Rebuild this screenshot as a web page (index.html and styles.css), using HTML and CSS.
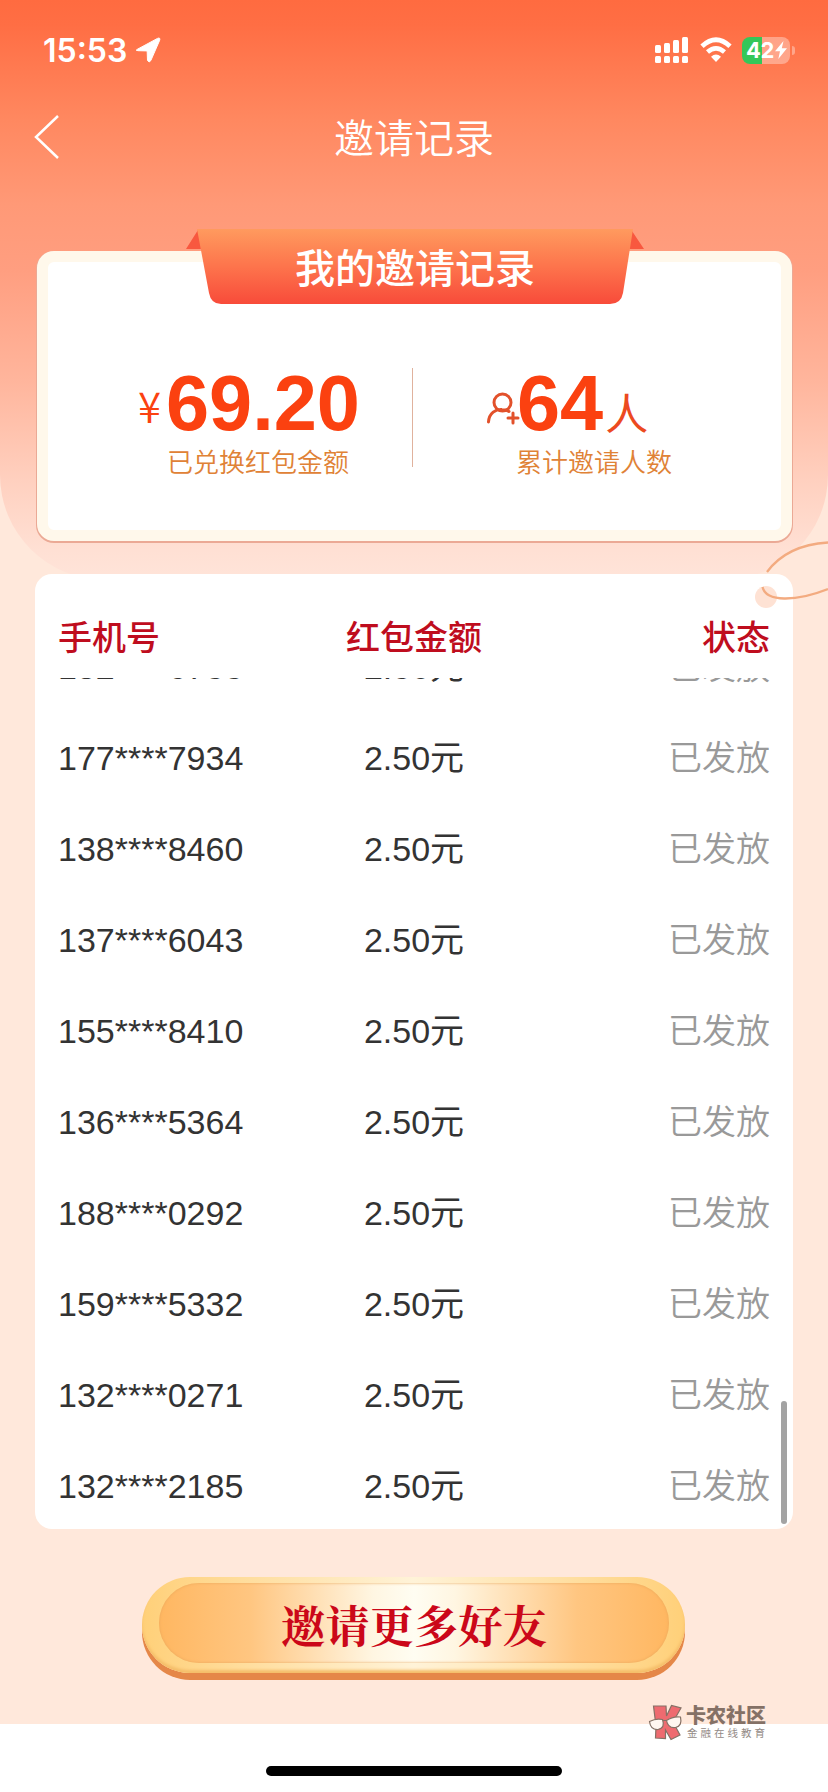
FILE: index.html
```html
<!DOCTYPE html>
<html lang="zh-CN">
<head>
  <meta charset="UTF-8"/>
  <meta name="viewport" content="width=device-width, initial-scale=1.0"/>
  <title>邀请记录</title>
  <link rel="stylesheet" href="styles.css">
</head>
<body>

<div class="page">
  <div class="hero-bg"></div>
  <svg class="loop loop-back" viewBox="0 0 72 70">
    <path class="loop-fill" d="M11 38C25 19 47 10 72 8V55C40 65 12 65 11 38Z"/>
    <path d="M11 38C25 19 47 10 72 8.500"/>
  </svg>

  <header class="status-bar">
    <span class="time">15:53</span>
    <svg class="location" viewBox="0 0 24 24"><path d="M1.500 11.200 21.500.4Q24.500-.8 23.700 2.200L14.800 22.600Q13.200 25.200 11.500 22.500L11.200 13.700Q11.100 12.900 10.300 12.900L2 12.700Q-1.200 12.500 1.500 11.200Z"/></svg>
    <div class="status-icons">
      <svg class="signal" viewBox="0 0 33 26">
        <rect x="0" y="8" width="6" height="8" rx="1.500"/>
        <rect x="9" y="6" width="6" height="10" rx="1.500"/>
        <rect x="18" y="3" width="6" height="13" rx="1.500"/>
        <rect x="27" y="0" width="6" height="16" rx="1.500"/>
        <rect x="0" y="19" width="6" height="7" rx="1.500"/>
        <rect x="9" y="19" width="6" height="7" rx="1.500"/>
        <rect x="18" y="19" width="6" height="7" rx="1.500"/>
        <rect x="27" y="19" width="6" height="7" rx="1.500"/>
      </svg>
      <svg class="wifi" viewBox="0 0 32 24">
        <path d="M2 8.300Q16-4.600 30 8.300" stroke-width="4.800"/>
        <path d="M7.500 14Q16 6.600 24.500 14" stroke-width="4.600"/>
        <path class="wifi-dot" d="M11 18.700Q16 14.300 21 18.700L16 24Z"/>
      </svg>
      <div class="battery">
        <span>42</span>
        <svg viewBox="0 0 12 18"><path d="M8.500 0 0 10.300H5L3.300 18 12 7.200H6.800Z"/></svg>
      </div>
      <i class="battery-tip"></i>
    </div>
  </header>

  <nav class="nav">
    <svg class="back" viewBox="0 0 26 46"><path d="M24 1 2 22 24 43"/></svg>
    <h1>邀请记录</h1>
  </nav>

  <section class="summary">
    <div class="ribbon">
      <svg viewBox="0 0 460 75">
        <defs>
          <linearGradient id="ribbon" x1="0" y1="0" x2="0" y2="1">
            <stop offset="0" stop-color="#ff9a5e"/>
            <stop offset=".5" stop-color="#fd744c"/>
            <stop offset="1" stop-color="#f84b3a"/>
          </linearGradient>
        </defs>
        <path fill="#f8583f" d="M13 1 1 20H17ZM447 2 459 20H442Z"/>
        <path fill="url(#ribbon)" d="M12 0H448L438 64Q436 75 425 75H36Q26 75 24 64Z"/>
      </svg>
      <h2>我的邀请记录</h2>
    </div>
    <div class="stat stat-money">
      <div class="figure"><span class="yen">¥</span><b>69.20</b></div>
      <p>已兑换红包金额</p>
    </div>
    <div class="divider"></div>
    <div class="stat stat-people">
      <div class="figure">
        <svg class="person" viewBox="0 0 32 31">
          <circle cx="15.500" cy="9.500" r="8.500"/>
          <path d="M1.500 29C2 20 9 16 15 16.500Q19 16.500 22 18.500"/>
          <path d="M26 20V30M21 25H31"/>
        </svg>
        <b>64</b><span class="unit">人</span>
      </div>
      <p>累计邀请人数</p>
    </div>
  </section>

  <section class="records">
    <div class="row head"><span>手机号</span><span>红包金额</span><span>状态</span></div>
    <div class="list">
      <div class="row"><span>132****6788</span><span>2.50元</span><span>已发放</span></div>
      <div class="row"><span>177****7934</span><span>2.50元</span><span>已发放</span></div>
      <div class="row"><span>138****8460</span><span>2.50元</span><span>已发放</span></div>
      <div class="row"><span>137****6043</span><span>2.50元</span><span>已发放</span></div>
      <div class="row"><span>155****8410</span><span>2.50元</span><span>已发放</span></div>
      <div class="row"><span>136****5364</span><span>2.50元</span><span>已发放</span></div>
      <div class="row"><span>188****0292</span><span>2.50元</span><span>已发放</span></div>
      <div class="row"><span>159****5332</span><span>2.50元</span><span>已发放</span></div>
      <div class="row"><span>132****0271</span><span>2.50元</span><span>已发放</span></div>
      <div class="row"><span>132****2185</span><span>2.50元</span><span>已发放</span></div>
    </div>
    <i class="scrollbar"></i>
  </section>

  <svg class="loop" viewBox="0 0 72 70">
    <circle cx="10" cy="63" r="11"/>
    <path d="M6.500 53C10 68 39 68 72 55"/>
  </svg>

  <button class="invite"><span>邀请更多好友</span></button>
</div>

<div class="watermark">
  <svg viewBox="0 0 34 36">
    <path class="k" d="M5.500 2H18L18.500 12 23.500 1.500 33 4 25 18 32 31 23 35.500 17.500 26V34.500L7.500 34 8 22Z"/>
    <path class="lens" d="M1.500 17.500Q8 14 14.500 15.500 17.500 24 10 25.500 2.500 26 1.500 17.500ZM18.500 16.500Q25 12 32.500 13 34.500 22 27.500 23.500 20 24.500 18.500 16.500ZM14.500 16.500H18.500"/>
  </svg>
  <div>
    <strong>卡农社区</strong>
    <small>金融在线教育</small>
  </div>
</div>

<div class="home-indicator"></div>

</body>
</html>
```
FILE: styles.css
```css
* {
  box-sizing: border-box;
}
body {
  margin: 0;
  height: 1792px;
  position: relative;
  overflow: hidden;
  background: #fff;
  color: #333;
  font-family: "Liberation Sans", "Noto Sans CJK SC", sans-serif;
}
h1, h2, p {
  margin: 0;
}
svg {
  display: block;
  overflow: visible;
}
.page {
  position: relative;
  height: 1724px;
  background: #ffe8db;
}
.hero-bg {
  position: absolute;
  top: 0;
  left: 0;
  width: 100%;
  height: 580px;
  border-radius: 0 0 105px 105px;
  background: linear-gradient(#ff6b40 0, #ff6e44 25px, #ff8860 120px, #ff9977 205px, #ff9e80 270px, #ffb59c 380px, #ffd0bf 480px, #ffe0d4 550px, #ffe4d9 580px);
}
/* decorative line round the corner of the list */
.loop {
  position: absolute;
  left: 756px;
  top: 534px;
  width: 72px;
  height: 70px;
  fill: none;
  stroke: #f3ab80;
  stroke-width: 2.300;
}
.loop-fill {
  fill: #ffe8db;
  stroke: none;
}
.loop circle {
  fill: #fee2d4;
  stroke: none;
}

/* status bar */
.status-bar {
  position: relative;
  display: flex;
  align-items: center;
  height: 100px;
  padding: 0 33px 0 43px;
  color: #fff;
  font-family: Inter, sans-serif;
}
.status-bar svg {
  fill: #fff;
}
.time {
  font-size: 32px;
  font-weight: 600;
  width: 93px;
}
.status-bar .location {
  width: 24px;
  height: 24px;
  stroke: #fff;
  stroke-width: 1;
}
.status-icons {
  display: flex;
  align-items: center;
  margin-left: auto;
}
.signal {
  width: 33px;
  height: 26px;
}
.wifi {
  width: 32px;
  height: 24px;
  margin: 0 10px 0 12px;
}
.wifi path {
  fill: none;
  stroke: #fff;
}
.wifi .wifi-dot {
  fill: #fff;
  stroke: none;
}
.battery {
  display: flex;
  align-items: center;
  width: 48px;
  height: 27px;
  padding-left: 4px;
  border-radius: 8px;
  background: linear-gradient(90deg, #34c759 20px, rgba(255, 255, 255, .35) 20px);
  font-size: 22px;
  font-weight: 700;
  letter-spacing: -.3px;
}
.battery svg {
  width: 12px;
  height: 18px;
  margin-left: 1px;
}
.battery-tip {
  width: 3px;
  height: 9px;
  margin-left: 2px;
  border-radius: 0 4px 4px 0;
  background: rgba(255, 255, 255, .35);
}

.nav {
  position: relative;
  display: flex;
  align-items: center;
  height: 76px;
  padding: 0 34px;
}
.nav h1 {
  flex: 1;
  margin-right: 26px;
  text-align: center;
  color: #fff;
  font-size: 40px;
  font-weight: 350;
  line-height: 76px;
  padding-top: 2px;
}
.back {
  width: 26px;
  height: 46px;
  fill: none;
  stroke: #fff;
  stroke-width: 2.500;
}

/* summary card */
.summary {
  position: relative;
  display: flex;
  width: 755px;
  height: 290px;
  margin: 75px 0 0 37px;
  border: 11px solid #fff8eb;
  border-radius: 17px;
  background: #fff;
  box-shadow: 0 1px 0 1px #eba995;
}
.ribbon {
  position: absolute;
  top: -33px;
  left: 137px;
  width: 460px;
  height: 75px;
}
.ribbon h2 {
  position: absolute;
  inset: 0;
  text-align: center;
  color: #fff;
  font-size: 40px;
  font-weight: 500;
  line-height: 80px;
}
.stat {
  padding-top: 101px;
}
.stat-money {
  width: 364px;
  padding-left: 90px;
}
.stat-people {
  padding-left: 74px;
}
.figure {
  display: flex;
  align-items: baseline;
  height: 78px;
  color: #fb4110;
  line-height: 80px;
}
.figure b {
  font-size: 77.500px;
}
.yen {
  width: 28px;
  font-family: "Noto Sans CJK SC", sans-serif;
  font-size: 42px;
  font-weight: 350;
  position: relative;
  top: -7px;
}
.unit {
  margin-left: 2px;
  font-size: 43px;
  color: #ec4a1f;
}
.person {
  align-self: flex-start;
  width: 32px;
  height: 31px;
  margin: 30px -2px 0 0;
  fill: none;
  stroke: #e2512b;
  stroke-width: 3;
  stroke-linecap: round;
}
.stat p {
  padding: 3px 0 0 29px;
  color: #e08236;
  font-size: 26px;
  font-weight: 350;
  line-height: 38px;
}
.divider {
  width: 1px;
  height: 99px;
  margin-top: 106px;
  background: #e0b29d;
}

/* records */
.records {
  position: relative;
  width: 758px;
  height: 955px;
  margin: 33px 0 0 35px;
  border-radius: 17px;
  background: #fff;
  overflow: hidden;
}
.row {
  display: grid;
  grid-template-columns: 1fr 1fr 1fr;
  align-items: baseline;
  height: 91px;
  padding: 0 23px;
  font-size: 34px;
  line-height: 97px;
}
.row span:nth-child(2) {
  text-align: center;
}
.row span:nth-child(3) {
  text-align: right;
  color: #999;
  font-weight: 350;
}
.row.head {
  height: 104px;
  padding-top: 24px;
  line-height: 80px;
}
.row.head span {
  color: #bf0d1e;
  font-weight: 500;
}
.list {
  display: flex;
  flex-direction: column;
  justify-content: flex-end;
  height: 851px;
  overflow: hidden;
}
.list .row {
  flex: none;
}
.scrollbar {
  position: absolute;
  right: 6px;
  bottom: 5px;
  width: 6px;
  height: 123px;
  border-radius: 3px;
  background: #a3a3a3;
}

.invite {
  display: flex;
  width: 543px;
  height: 96px;
  margin: 48px 0 0 142px;
  padding: 6px 16px 10px 17px;
  border: 0;
  border-radius: 48px;
  background: linear-gradient(90deg, #ffd079, #fff3d8 50%, #ffd079);
  box-shadow: 0 7px 0 #e58748, inset 0 -3px 3px #f5bd69;
}
.invite span {
  flex: 1;
  border-radius: 40px;
  background: linear-gradient(90deg, #ffb761, #ffc681 18%, #fff6e2 42%, #fffdf2 50%, #fff6e2 58%, #ffc681 82%, #ffb761);
  box-shadow: inset 0 0 3px #e9a85c;
  color: #cb0719;
  font-family: "Noto Serif CJK SC", "Noto Sans CJK SC", serif;
  font-size: 44.300px;
  font-weight: 700;
  line-height: 82px;
}

.watermark {
  position: absolute;
  left: 648px;
  top: 1704px;
  display: flex;
  color: #857166;
}
.watermark svg {
  width: 34px;
  height: 36px;
  margin-right: 4px;
  stroke: #857166;
  stroke-width: 1.200;
}
.k {
  fill: #ee6b70;
}
.lens {
  fill: #fff6f0;
}
.watermark strong, .watermark small {
  display: block;
  white-space: nowrap;
}
.watermark strong {
  font-size: 20px;
  font-weight: 900;
  line-height: 24px;
}
.watermark small {
  margin-left: 1px;
  color: #938a86;
  font-size: 10.500px;
  letter-spacing: 3px;
  line-height: 11px;
}
.home-indicator {
  width: 296px;
  height: 10px;
  margin: 42px auto 0;
  border-radius: 5px;
  background: #000;
}
```
